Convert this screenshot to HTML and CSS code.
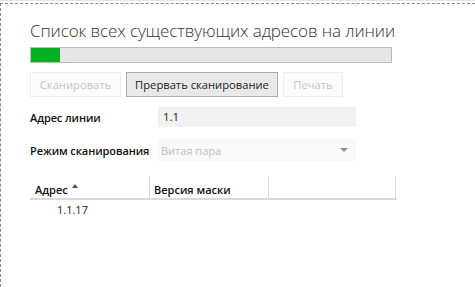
FILE: index.html
```html
<!DOCTYPE html>
<html lang="ru">
<head>
<meta charset="utf-8">
<link rel="stylesheet" href="styles.css">
</head>
<body>
<div class="topline"></div>
<div class="panel">
  <h1 class="title">Список всех существующих адресов на линии</h1>
  <div class="progress"><div class="progress-fill" style="width: 29px"></div></div>
  <div class="buttons">
    <button class="btn btn-scan" disabled>Сканировать</button>
    <button class="btn btn-stop">Прервать сканирование</button>
    <button class="btn btn-print" disabled>Печать</button>
  </div>
  <div class="field field-addr">
    <label class="field-label">Адрес линии</label>
    <div class="input">1.1</div>
  </div>
  <div class="field field-mode">
    <label class="field-label">Режим сканирования</label>
    <div class="combo"><span class="combo-text">Витая пара</span><span class="combo-arrow"></span></div>
  </div>
  <div class="table">
    <div class="thead">
      <div class="th th-addr">Адрес <span class="sort"></span></div>
      <div class="th th-mask">Версия маски</div>
      <div class="th th-rest"></div>
    </div>
    <div class="row"><div class="td">1.1.17</div></div>
  </div>
</div>
</body>
</html>
```
FILE: styles.css
```css
html, body {
  margin: 0;
  padding: 0;
  background: #fff;
  width: 475px;
  height: 287px;
  overflow: hidden;
  font-family: "Open Sans", "Noto Sans", sans-serif;
  font-size: 11px;
  color: #222;
}
.topline {
  height: 1px;
  background: #e4e4e4;
}
.panel {
  margin-top: 2px;
  border-top: 1px dashed #8a8a8a;
  border-left: 1px dashed #8a8a8a;
  height: 284px;
  padding-left: 29px;
  box-sizing: border-box;
}
.title {
  margin: 0;
  padding-top: 15px;
  font-weight: 300;
  font-size: 17px;
  line-height: 24px;
  color: #333;
  letter-spacing: -0.1px;
}
.progress {
  margin-top: 4px;
  width: 362px;
  height: 16px;
  box-sizing: border-box;
  border: 1px solid #bcbcbc;
  background: #e6e6e6;
}
.progress-fill {
  height: 14px;
  background: #06b025;
}
.buttons {
  display: flex;
  margin-top: 9px;
  gap: 5px;
}
.btn {
  height: 25px;
  box-sizing: border-box;
  font-family: inherit;
  font-size: 11.2px;
  padding: 0;
  border: 1px solid #adadad;
  background: #e9e9e9;
  color: #222;
}
.btn[disabled] {
  border-color: #eeeeee;
  background: #fcfcfc;
  color: #c4c4c4;
}
.btn-scan { width: 91px; }
.btn-stop { width: 152px; }
.btn-print { width: 60px; }
.field {
  display: flex;
  align-items: center;
}
.field-label {
  width: 128px;
  flex-shrink: 0;
  white-space: nowrap;
  font-weight: 600;
  color: #111;
  letter-spacing: -0.1px;
}
.field-addr { margin-top: 10px; }
.field-mode { margin-top: 12px; }
.input {
  width: 198px;
  height: 20px;
  line-height: 20px;
  background: #f1f1f1;
  padding-left: 5px;
  box-sizing: border-box;
  color: #222;
  font-size: 11.5px;
}
.combo {
  width: 198px;
  height: 22px;
  background: #f9f9f9;
  display: flex;
  align-items: center;
  justify-content: space-between;
  padding: 0 8px 0 3px;
  box-sizing: border-box;
}
.combo-text { color: #c0c0c0; }
.combo-arrow {
  width: 0;
  height: 0;
  border-left: 4px solid transparent;
  border-right: 4px solid transparent;
  border-top: 4px solid #909090;
}
.table {
  margin-top: 15px;
  width: 367px;
}
.thead {
  display: flex;
  height: 24px;
  border-bottom: 2px solid #dadada;
  box-sizing: border-box;
}
.th {
  font-weight: 600;
  color: #111;
  display: flex;
  align-items: center;
  padding-top: 4px;
  box-sizing: border-box;
  white-space: nowrap;
}
.th-addr { width: 120px; padding-left: 5px; border-right: 1px solid #dadada; gap: 4px; }
.th-mask { width: 119px; padding-left: 4px; border-right: 1px solid #dadada; }
.th-rest { width: 127px; border-right: 1px solid #dadada; }
.sort {
  width: 0;
  height: 0;
  border-left: 3px solid transparent;
  border-right: 3px solid transparent;
  border-bottom: 4px solid #555;
  margin-top: -6px;
}
.row {
  height: 22px;
}
.td {
  padding-left: 27px;
  line-height: 20px;
  color: #222;
}
```
